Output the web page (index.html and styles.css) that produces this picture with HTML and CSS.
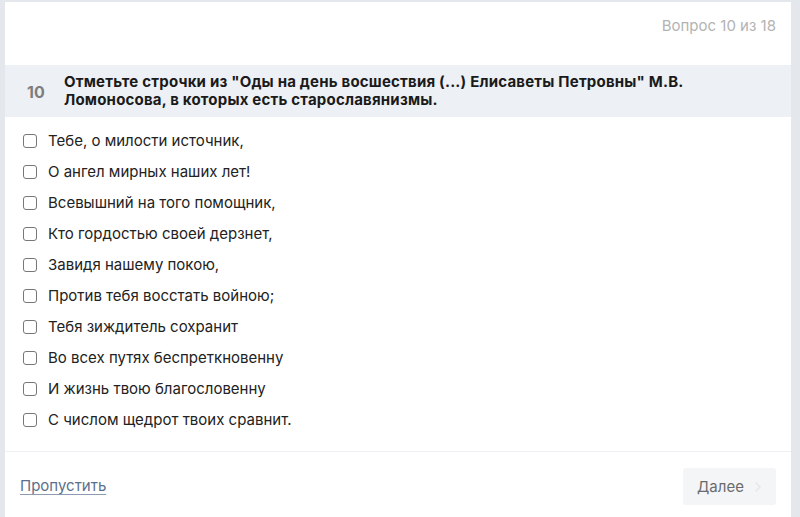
FILE: index.html
```html
<!DOCTYPE html>
<html lang="ru">
<head>
<meta charset="utf-8">
<link rel="stylesheet" href="styles.css">
</head>
<body>
<div class="card">
  <div class="top">
    <span class="counter">Вопрос 10 из 18</span>
  </div>
  <div class="question">
    <div class="qnum">10</div>
    <div class="qtext">Отметьте строчки из "Оды на день восшествия (...) Елисаветы Петровны" М.В. Ломоносова, в которых есть старославянизмы.</div>
  </div>
  <ul class="options">
    <li class="opt"><span class="box"></span><span>Тебе, о милости источник,</span></li>
    <li class="opt"><span class="box"></span><span>О ангел мирных наших лет!</span></li>
    <li class="opt"><span class="box"></span><span>Всевышний на того помощник,</span></li>
    <li class="opt"><span class="box"></span><span>Кто гордостью своей дерзнет,</span></li>
    <li class="opt"><span class="box"></span><span>Завидя нашему покою,</span></li>
    <li class="opt"><span class="box"></span><span>Против тебя восстать войною;</span></li>
    <li class="opt"><span class="box"></span><span>Тебя зиждитель сохранит</span></li>
    <li class="opt"><span class="box"></span><span>Во всех путях беспреткновенну</span></li>
    <li class="opt"><span class="box"></span><span>И жизнь твою благословенну</span></li>
    <li class="opt"><span class="box"></span><span>С числом щедрот твоих сравнит.</span></li>
  </ul>
  <div class="footer">
    <a class="skip" href="#">Пропустить</a>
    <button class="next">Далее <svg class="chev" width="8" height="12" viewBox="0 0 8 12"><path d="M2 2l4 4-4 4" fill="none" stroke="#e6e8ec" stroke-width="1.6" stroke-linecap="round" stroke-linejoin="round"/></svg></button>
  </div>
</div>
</body>
</html>
```
FILE: styles.css
```css
html, body {
  margin: 0;
  padding: 0;
  background: #e4e7eb;
  height: 100%;
}
body {
  font-family: Inter, "Noto Sans", sans-serif;
  color: #222;
  overflow: hidden;
}
.card {
  margin: 2px 0 0 5px;
  width: 786px;
  height: 515px;
  background: #fff;
  display: flex;
  flex-direction: column;
}
.top {
  height: 63px;
  display: flex;
  justify-content: flex-end;
  padding: 14px 15px 0 0;
  box-sizing: border-box;
}
.counter {
  font-size: 15px;
  color: #b3b3b3;
}
.question {
  height: 52px;
  background: #edf0f4;
  display: flex;
  align-items: center;
  padding-left: 22px;
  box-sizing: border-box;
}
.qnum {
  width: 37px;
  font-size: 16px;
  font-weight: 700;
  color: #7d7d7d;
  padding-top: 1px;
}
.qtext {
  font-size: 15px;
  font-weight: 700;
  line-height: 18px;
  letter-spacing: 0.2px;
  color: #1a1a1a;
  width: 700px;
}
.options {
  list-style: none;
  margin: 0;
  padding: 8px 0 0 18px;
  height: 335px;
  box-sizing: border-box;
  border-bottom: 1px solid #eef0f3;
}
.opt {
  height: 31px;
  display: flex;
  align-items: center;
  font-size: 15px;
  color: #222;
}
.box {
  width: 12px;
  height: 12px;
  border: 1.5px solid #777;
  border-radius: 3px;
  margin-right: 11px;
  flex: none;
}
.footer {
  flex: 1;
  display: flex;
  align-items: center;
  justify-content: space-between;
  padding: 4px 15px 0 15px;
}
.skip {
  font-size: 15px;
  color: #5b6f8e;
  text-decoration: underline;
  text-underline-offset: 3px;
  text-decoration-color: #8d9bb0;
  padding-bottom: 2px;
}
.next {
  width: 93px;
  height: 37px;
  border: none;
  background: #f4f5f7;
  border-radius: 3px;
  font-family: Inter, "Noto Sans", sans-serif;
  font-size: 15px;
  color: #6b6b6b;
  display: flex;
  align-items: center;
  justify-content: center;
  gap: 10px;
  padding: 0;
}
```
